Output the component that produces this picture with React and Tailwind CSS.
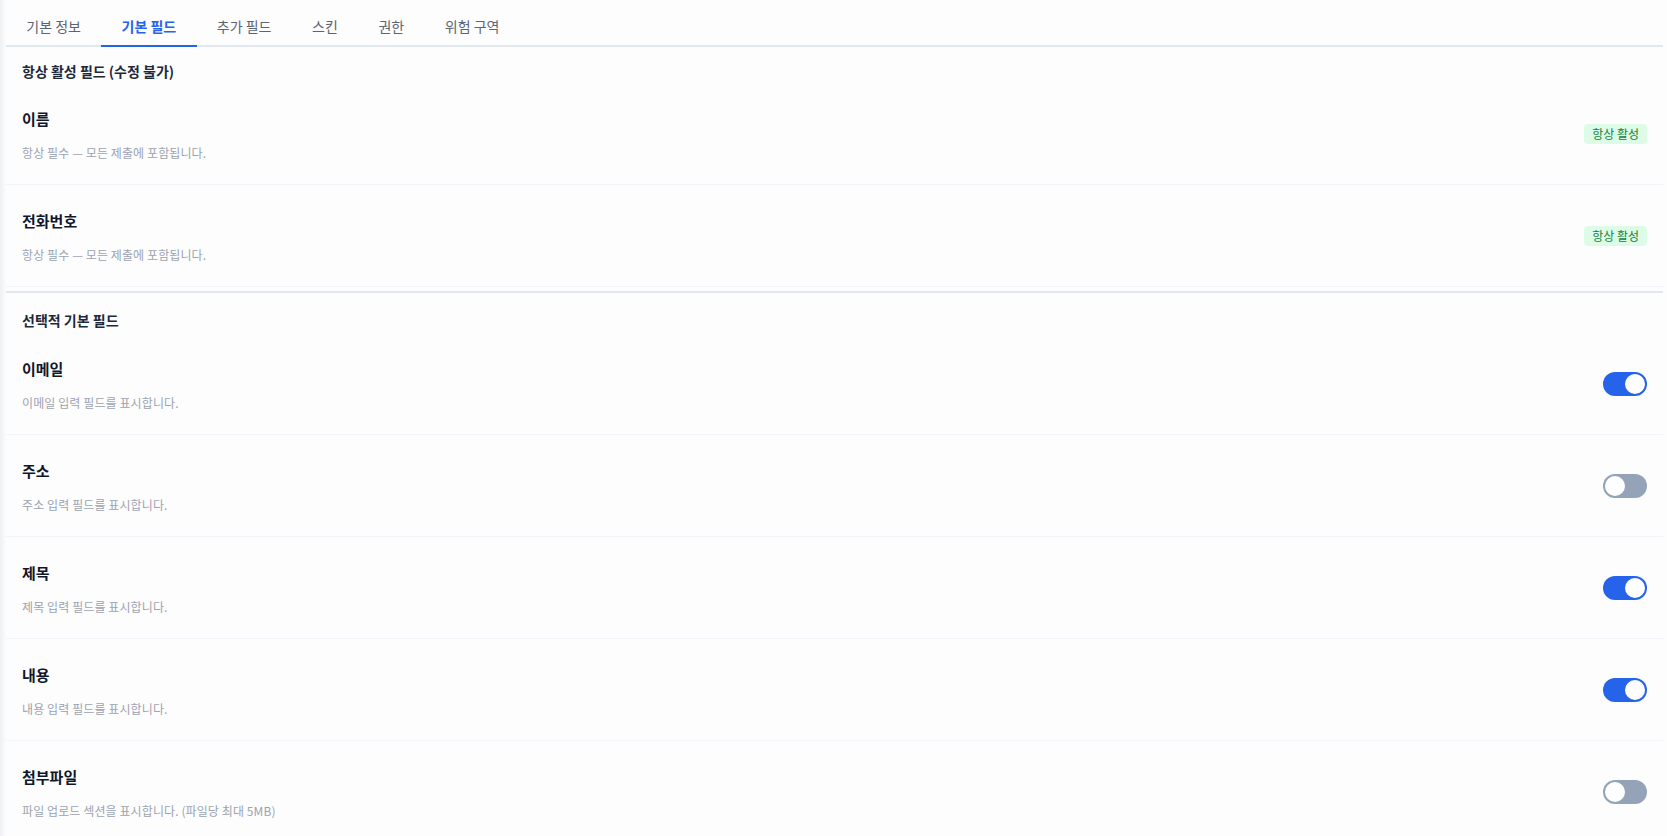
import { useState } from "react";

const tabs = ["기본 정보", "기본 필드", "추가 필드", "스킨", "권한", "위험 구역"];

const fixedFields = [
  { name: "이름", desc: "항상 필수 — 모든 제출에 포함됩니다." },
  { name: "전화번호", desc: "항상 필수 — 모든 제출에 포함됩니다." },
];

const optionalFields = [
  { key: "email", name: "이메일", desc: "이메일 입력 필드를 표시합니다.", on: true },
  { key: "address", name: "주소", desc: "주소 입력 필드를 표시합니다.", on: false },
  { key: "title", name: "제목", desc: "제목 입력 필드를 표시합니다.", on: true },
  { key: "content", name: "내용", desc: "내용 입력 필드를 표시합니다.", on: true },
  { key: "files", name: "첨부파일", desc: "파일 업로드 섹션을 표시합니다. (파일당 최대 5MB)", on: false },
];

const Toggle = ({ on, onClick }) => (
  <button
    onClick={onClick}
    className={`relative h-6 w-11 shrink-0 rounded-full ${on ? "bg-[#2563eb]" : "bg-[#94a3b8]"}`}
  >
    <span
      className={`absolute top-[2px] h-5 w-5 rounded-full bg-white ${on ? "left-[22px]" : "left-[2px]"}`}
    />
  </button>
);

const FieldRow = ({ name, desc, children }) => (
  <div className="flex items-center justify-between border-b border-[#f1f5f9] px-4 pt-6 pb-[23px]">
    <div>
      <div className="text-[15px] font-bold leading-6 text-[#0f172a]">{name}</div>
      <div className="mt-3.5 text-xs leading-4 tracking-[0.1px] text-[#9ca3af]">{desc}</div>
    </div>
    {children}
  </div>
);

export default function App() {
  const [active, setActive] = useState(1);
  const [fields, setFields] = useState(optionalFields);

  const toggle = (key) => {
    setFields(fields.map((f) => (f.key === key ? { ...f, on: !f.on } : f)));
  };

  return (
    <div
      className="flex min-h-screen bg-[#fdfdfe]"
      style={{ fontFamily: '"Noto Sans CJK KR", "Noto Sans", sans-serif' }}
    >
      <div className="w-[6px] shrink-0 bg-gradient-to-r from-[#eef0f3] to-[#fcfcfd]" />
      <div className="mr-[4px] flex-1">
        {/* tabs */}
        <div className="flex border-b-2 border-[#e2e8f0]">
          {tabs.map((t, i) => (
            <button
              key={t}
              onClick={() => setActive(i)}
              className={`-mb-[2px] border-b-2 px-[20.3px] pt-4 pb-[9px] text-sm leading-5 ${
                active === i
                  ? "border-[#2563eb] font-bold text-[#2563eb]"
                  : "border-transparent text-[#5b6472]"
              }`}
            >
              {t}
            </button>
          ))}
        </div>

        {/* always-on fields */}
        <div className="pt-[14px] pb-1">
          <h3 className="mb-[2px] px-4 text-sm font-bold leading-5 text-[#1e293b]">
            항상 활성 필드 (수정 불가)
          </h3>
          {fixedFields.map((f) => (
            <FieldRow key={f.name} name={f.name} desc={f.desc}>
              <span className="rounded bg-[#dcfce7] px-2 text-xs leading-5 text-[#15803d]">
                항상 활성
              </span>
            </FieldRow>
          ))}
        </div>

        {/* optional fields */}
        <div className="border-t-2 border-[#e2e8f0] pt-[17px]">
          <h3 className="mb-[3px] px-4 text-sm font-bold leading-5 text-[#1e293b]">
            선택적 기본 필드
          </h3>
          {fields.map((f) => (
            <FieldRow key={f.key} name={f.name} desc={f.desc}>
              <Toggle on={f.on} onClick={() => toggle(f.key)} />
            </FieldRow>
          ))}
        </div>
      </div>
    </div>
  );
}
